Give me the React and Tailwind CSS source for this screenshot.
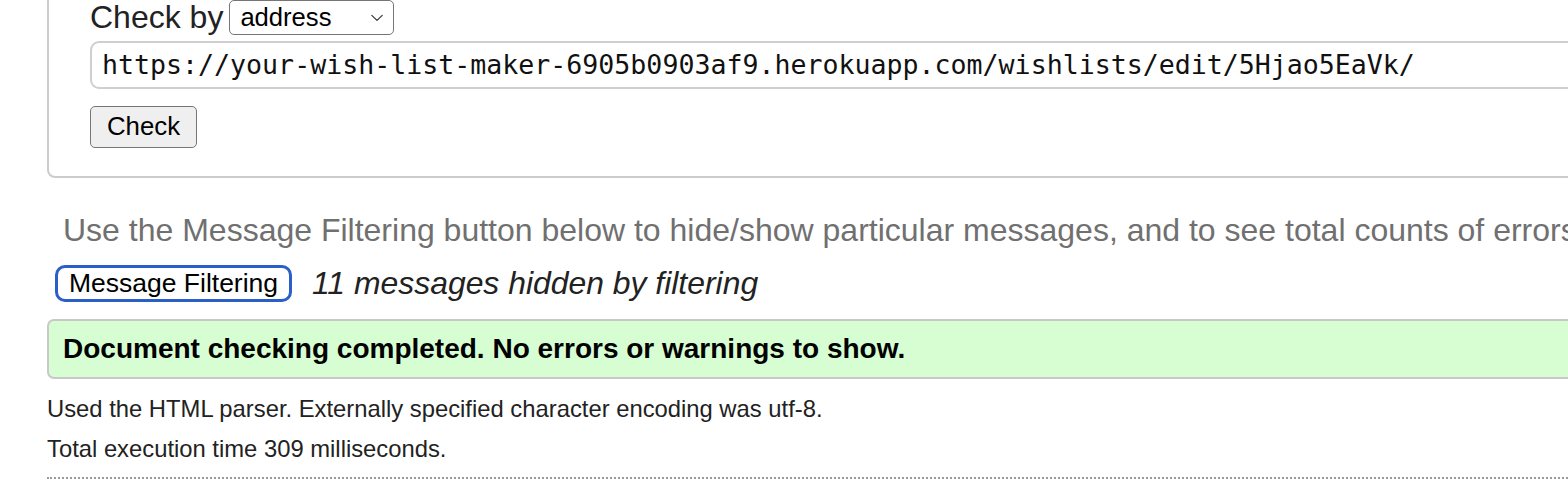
export default function App() {
  const url = 'https://your-wish-list-maker-6905b0903af9.herokuapp.com/wishlists/edit/5Hjao5EaVk/';

  return (
    <div className="w-[1568px] h-[500px] overflow-hidden bg-white text-[#222] font-['Liberation_Sans',Arial,sans-serif]">
      <div className="w-[1700px] pl-[47px]">
        {/* validate-by-uri fieldset, top edge scrolled out of view */}
        <div className="-mt-[12px] pt-[10px] pb-[28px] pl-[41px] border-2 border-[#cccccc] rounded-[8px]">
          <div className="flex items-center h-[35px]">
            <span className="text-[32px] leading-[32px] -mt-[2px] text-[#222]">Check by</span>
            <div className="ml-[6px] w-[165px] h-[35px] border border-[#767676] rounded-[5px] flex items-center justify-between pl-[10px] pr-[10px] bg-white">
              <span className="text-[25.6px] leading-none text-black">address</span>
              <svg width="12" height="8" viewBox="0 0 12 8" fill="none" className="mt-[1px]">
                <path d="M0.8 1.4 L6 6.4 L11.2 1.4" stroke="#333" strokeWidth="1.15" strokeLinecap="round" strokeLinejoin="round" />
              </svg>
            </div>
          </div>

          <div className="mt-[6px] h-[48px] border-2 border-[#cfcfcf] rounded-[9px] pl-[10px] flex items-center">
            <span className="font-['DejaVu_Sans_Mono',Menlo,monospace] text-[26.6px] leading-none text-[#111] whitespace-nowrap">{url}</span>
          </div>

          <div className="mt-[17px] w-[107px] h-[42px] border border-[#767676] rounded-[5px] bg-[#efefef] flex items-center justify-center">
            <span className="text-[25.8px] leading-none text-black">Check</span>
          </div>
        </div>

        <p className="mt-[34px] pl-[16px] text-[32px] leading-[36px] text-[#707070] whitespace-nowrap">
          Use the Message Filtering button below to hide/show particular messages, and to see total counts of errors
        </p>

        <div className="mt-[17px] pl-[8px] flex items-center h-[37px]">
          <div className="w-[237px] h-[37px] border-[3px] border-[#2a5ec8] rounded-[10px] bg-white flex items-center justify-center">
            <span className="text-[26.5px] leading-none text-black whitespace-nowrap">Message Filtering</span>
          </div>
          <span className="ml-[20px] text-[31.9px] leading-none italic text-[#222] whitespace-nowrap">11 messages hidden by filtering</span>
        </div>

        <div className="mt-[17px] h-[60px] border-2 border-[#c8c8c8] rounded-[7px] bg-[#d7fdd3] pl-[14px] flex items-center">
          <span className="text-[28px] leading-none font-bold text-black whitespace-nowrap">
            Document checking completed. No errors or warnings to show.
          </span>
        </div>

        <div className="mt-[10px] text-[23.8px] leading-[40px] text-[#222]">
          <p>Used the HTML parser. Externally specified character encoding was utf-8.</p>
          <p>Total execution time 309 milliseconds.</p>
        </div>

        <div className="mt-[8px] border-t-2 border-dotted border-[#9a9a9a]" />
      </div>
    </div>
  );
}
